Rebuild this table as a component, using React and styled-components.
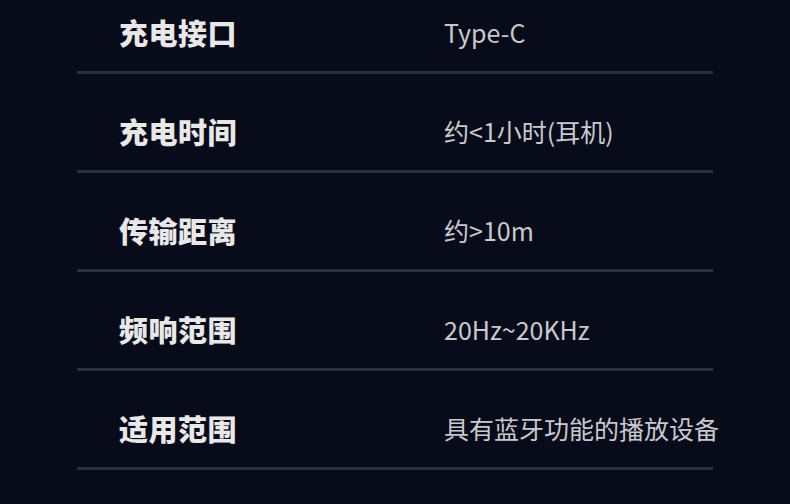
import React from "react";
import styled, { createGlobalStyle } from "styled-components";

const GlobalStyle = createGlobalStyle`
  html, body {
    margin: 0;
    padding: 0;
    background: #080c1a;
  }
  body {
    font-family: "Noto Sans CJK SC", "Noto Sans", sans-serif;
  }
`;

const Page = styled.div`
  width: 790px;
  height: 504px;
  overflow: hidden;
  background: #080c1a;
`;

const SpecList = styled.div`
  width: 636px;
  margin-left: 77px;
  margin-top: -25px;
`;

const Row = styled.div`
  display: grid;
  grid-template-columns: 325px 1fr;
  align-items: center;
  padding: 37px 0 19px 42px;
  border-bottom: 3px solid #2c2f3e;
  height: 40px;
`;

const Label = styled.div`
  font-size: 29px;
  font-weight: 900;
  color: #e8e8e8;
  line-height: 40px;
  letter-spacing: 0.5px;
`;

const Value = styled.div`
  font-size: 25px;
  font-weight: 400;
  color: #c9c9cd;
  line-height: 40px;
  white-space: nowrap;
`;

const specs = [
  ["充电接口", "Type-C"],
  ["充电时间", "约<1小时(耳机)"],
  ["传输距离", "约>10m"],
  ["频响范围", "20Hz~20KHz"],
  ["适用范围", "具有蓝牙功能的播放设备"],
];

export default function App() {
  return (
    <Page>
      <GlobalStyle />
      <SpecList>
        {specs.map(([label, value]) => (
          <Row key={label}>
            <Label>{label}</Label>
            <Value>{value}</Value>
          </Row>
        ))}
      </SpecList>
    </Page>
  );
}
